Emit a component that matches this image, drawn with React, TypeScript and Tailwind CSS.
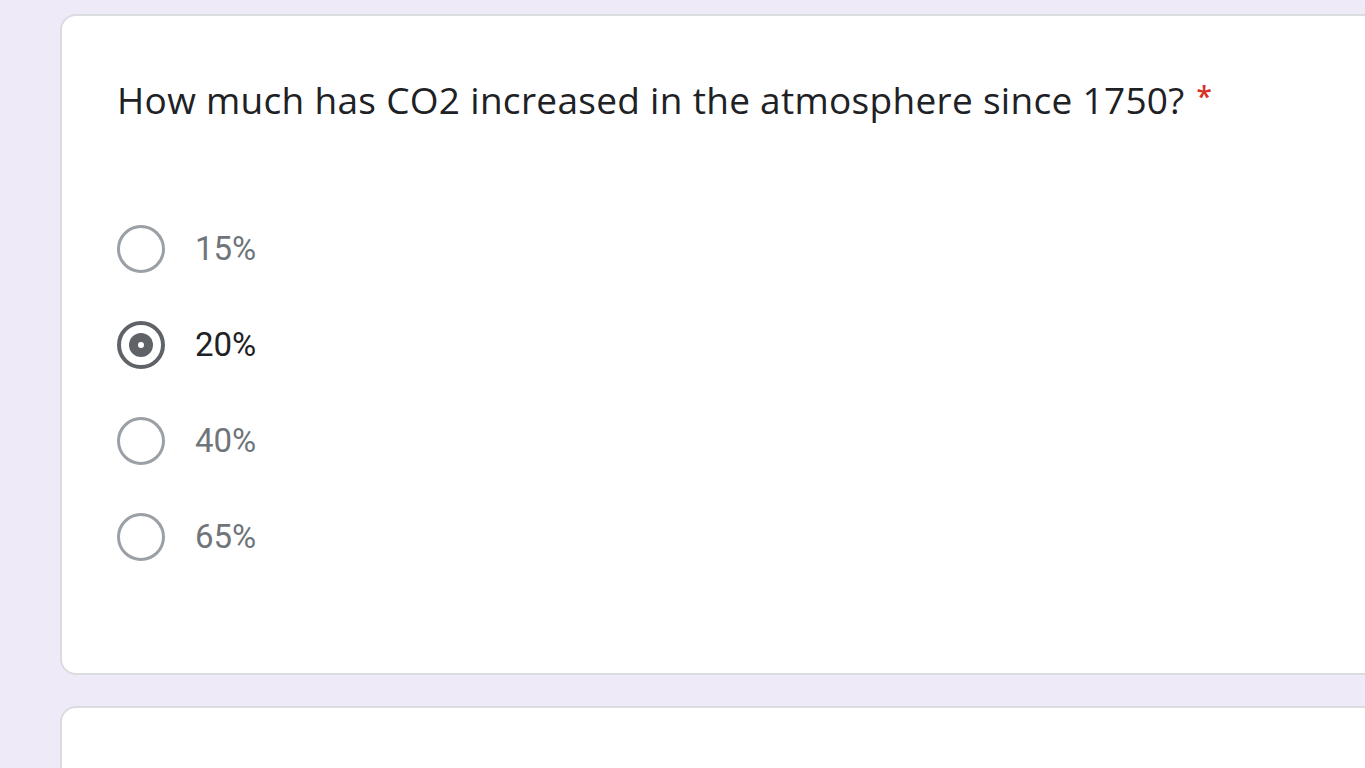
import { useState } from 'react';

const options = ['15%', '20%', '40%', '65%'];

function Radio({ checked }: { checked: boolean }) {
  return (
    <div
      className={`w-[48px] h-[48px] rounded-full flex items-center justify-center shrink-0 ${
        checked ? 'border-[4px] border-[#5f6368]' : 'border-[3px] border-[#9aa0a6]'
      }`}
    >
      {checked && (
        <div className="w-[24px] h-[24px] rounded-full bg-[#5f6368] flex items-center justify-center">
          <div className="w-[6px] h-[6px] rounded-full bg-white" />
        </div>
      )}
    </div>
  );
}

export default function App() {
  const [selected, setSelected] = useState('20%');

  return (
    <div className="h-screen overflow-hidden bg-[#eeeaf7] pl-[60px] pt-[14px]">
      <div className="w-[1400px] bg-white border-2 border-[#dadce0] rounded-[16px] pl-[55px] pt-[58px] pb-[88px]">
        <h2 className="text-[37px] leading-[52px] text-[#202124] font-['Open_Sans',sans-serif] tracking-[0.3px] flex items-start">
          <span>How much has CO2 increased in the atmosphere since 1750?</span>
          <span className="text-[#d93025] text-[28px] font-semibold leading-[44px] ml-[12px]">*</span>
        </h2>

        <div className="mt-[75px] flex flex-col">
          {options.map((opt) => (
            <label
              key={opt}
              onClick={() => setSelected(opt)}
              className="flex items-center gap-[30px] h-[96px] cursor-pointer"
            >
              <Radio checked={selected === opt} />
              <span
                className={`text-[33px] font-['Roboto',sans-serif] ${
                  selected === opt ? 'text-[#202124]' : 'text-[#70757a]'
                }`}
              >
                {opt}
              </span>
            </label>
          ))}
        </div>
      </div>

      <div className="w-[1400px] h-[200px] mt-[31px] bg-white border-2 border-[#dadce0] rounded-[16px]" />
    </div>
  );
}
